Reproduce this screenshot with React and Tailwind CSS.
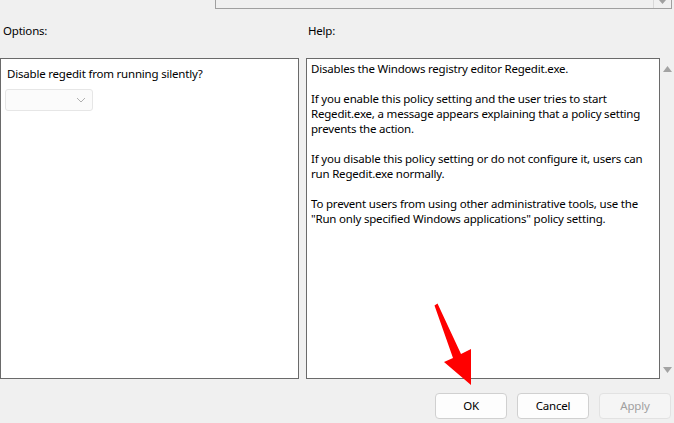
export default function App() {
  const font = { fontFamily: '"Segoe UI", "Noto Sans", "Open Sans", sans-serif' };
  return (
    <div className="relative w-[674px] h-[423px] overflow-hidden bg-[#f0f0f0] text-[11.5px] tracking-[-0.2px] text-black" style={font}>
      {/* top clipped box */}
      <div className="ml-[215px] w-[457px] h-[9px] bg-[#f0f0f0] border-l border-r border-b border-[#a0a0a0] flex justify-end">
        <div className="w-[18px] h-full border-l border-[#d8d8d8] flex items-start justify-center">
          <svg width="7" height="4" viewBox="0 0 7 4"><path d="M0 0 L7 0 L3.5 4 Z" fill="#a0a0a0" /></svg>
        </div>
      </div>
      {/* labels */}
      <div className="flex h-[49px] items-start pt-[14px] leading-[15px]">
        <div className="w-[306px] pl-[3px]">Options:</div>
        <div className="pl-[2px]">Help:</div>
      </div>
      {/* panels */}
      <div className="flex h-[321px]">
        <div className="w-[299px] h-full bg-white border border-[#6a6a6a] pt-[6px]">
          <div className="pl-[6px] leading-[18px]">Disable regedit from running silently?</div>
          <div className="ml-[4px] mt-[6px] w-[88px] h-[22px] bg-[#fbfbfb] border border-[#e6e6e6] rounded-[3px] flex items-center justify-end pr-[6px]">
            <svg width="10" height="6" viewBox="0 0 10 6"><path d="M1 1 L5 5 L9 1" fill="none" stroke="#b0b0b0" strokeWidth="1" /></svg>
          </div>
        </div>
        <div className="w-[7px]" />
        <div className="w-[354px] h-full bg-white border border-[#6a6a6a] pl-[4px] pt-[2px] leading-[15px]">
          <p>Disables the Windows registry editor Regedit.exe.</p>
          <p className="mt-[15px]">If you enable this policy setting and the user tries to start Regedit.exe, a message appears explaining that a policy setting prevents the action.</p>
          <p className="mt-[15px]">If you disable this policy setting or do not configure it, users can run Regedit.exe normally.</p>
          <p className="mt-[15px]">To prevent users from using other administrative tools, use the "Run only specified Windows applications" policy setting.</p>
        </div>
        <div className="flex-1 flex flex-col items-center justify-between pt-[8px] pb-[6px]">
          <svg width="9" height="6" viewBox="0 0 9 6"><path d="M0 6 L4.5 0 L9 6 Z" fill="#a3a3a3" /></svg>
          <svg width="9" height="6" viewBox="0 0 9 6"><path d="M0 0 L9 0 L4.5 6 Z" fill="#a3a3a3" /></svg>
        </div>
      </div>
      {/* buttons */}
      <div className="flex justify-end gap-[10px] pr-[3px] mt-[14px]">
        <button className="w-[72px] h-[26px] bg-[#fdfdfd] border border-[#d0d0d0] rounded-[4px] text-[11.5px] text-black" style={font}>OK</button>
        <button className="w-[72px] h-[26px] bg-[#fdfdfd] border border-[#d0d0d0] rounded-[4px] text-[11.5px] text-black" style={font}>Cancel</button>
        <button className="w-[72px] h-[26px] bg-[#f5f5f5] border border-[#e2e2e2] rounded-[4px] text-[11.5px] text-[#a0a0a0]" style={font}>Apply</button>
      </div>
      {/* red arrow overlay */}
      <svg className="absolute left-0 top-0 pointer-events-none" width="674" height="423" viewBox="0 0 674 423">
        <path d="M434.5 305.5 L437.5 303.5 L461 354 L471 349 L471 385 L444 362 L453 358 Z" fill="#ff0000" />
      </svg>
    </div>
  );
}
